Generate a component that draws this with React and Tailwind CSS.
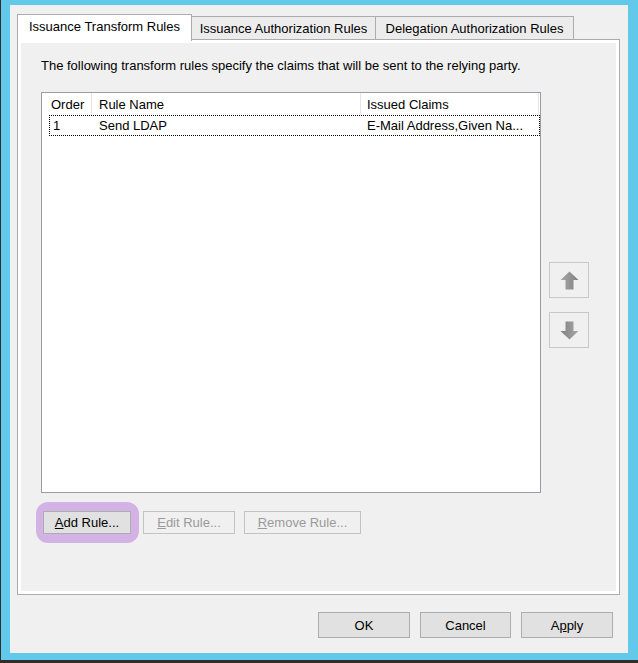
import React from "react";

function Arrow({ down }) {
    return (
        <svg width="19" height="19" viewBox="0 0 19 19" className={down ? "rotate-180" : ""}>
            <defs>
                <linearGradient id={down ? "gd" : "gu"} x1="0" y1="0" x2="1" y2="0">
                    <stop offset="0" stopColor="#a9a9a9" />
                    <stop offset="1" stopColor="#7f7f7f" />
                </linearGradient>
            </defs>
            <polygon
                points="9.5,0.5 18.5,9 13.5,9 13.5,18.5 5.5,18.5 5.5,9 0.5,9"
                fill={`url(#${down ? "gd" : "gu"})`}
            />
        </svg>
    );
}

function Btn({ children, w, disabled }) {
    return (
        <button
            className={
                "h-[23px] flex items-center justify-center border " +
                w +
                (disabled
                    ? " bg-[#f0f0f0] border-[#c3c3c3] text-[#9a9a9a]"
                    : " bg-[#e1e1e1] border-[#adadad] text-black")
            }
        >
            {children}
        </button>
    );
}

export default function App() {
    return (
        <div className="w-[638px] h-[663px] bg-[#2e2e2e] pl-px pb-[3px] font-['Liberation_Sans',Arial,sans-serif] text-[13px] leading-[15px] text-black">
            <div className="h-full bg-[#62c9ea] pt-[5px] pl-[9px] pr-[10px] pb-[7px]">
                <div className="h-full bg-[#f0f0f0] flex flex-col pt-[9px] pl-[7px] pr-[8px]">

                    {/* TABS */}
                    <div className="flex items-end h-[25px]">
                        <div className="relative z-10 h-[27px] -mb-[2px] w-[175px] bg-white border border-b-0 border-[#acacac] flex items-center justify-center pb-[3px]">
                            Issuance Transform Rules
                        </div>
                        <div className="h-[23px] w-[184px] bg-[#ececec] border-t border-r border-[#acacac] flex items-center justify-center">
                            Issuance Authorization Rules
                        </div>
                        <div className="h-[23px] w-[198px] bg-[#ececec] border-t border-r border-[#acacac] flex items-center justify-center">
                            Delegation Authorization Rules
                        </div>
                    </div>

                    {/* PANEL */}
                    <div className="h-[556px] border border-[#acacac] bg-white p-[3px]">
                        <div className="h-full bg-[#f0f0f0] pl-[20px] pt-[15px]">
                            <p>The following transform rules specify the claims that will be sent to the relying party.</p>

                            <div className="flex mt-[19px]">
                                {/* LIST */}
                                <div className="w-[500px] h-[401px] border border-[#9b9ca1] bg-white">
                                    <div className="flex h-[22px] items-center">
                                        <div className="w-[50px] h-full border-r border-[#e5e5e5] pl-[9px] flex items-center">Order</div>
                                        <div className="w-[269px] h-full border-r border-[#e5e5e5] pl-[7px] flex items-center">Rule Name</div>
                                        <div className="w-[178px] h-full border-r border-[#e5e5e5] pl-[6px] flex items-center">Issued Claims</div>
                                    </div>
                                    <div className="ml-[7px] w-[491px] h-[21px] border border-dotted border-black flex items-center">
                                        <div className="w-[42px] pl-[3px]">1</div>
                                        <div className="w-[269px] pl-[7px]">Send LDAP</div>
                                        <div className="pl-[6px]">E-Mail Address,Given Na...</div>
                                    </div>
                                </div>

                                {/* MOVE BUTTONS */}
                                <div className="ml-[8px] mt-[170px] flex flex-col gap-[14px]">
                                    <button className="w-[40px] h-[36px] border border-[#c8c8c8] bg-[#f0f0f0] flex items-center justify-center">
                                        <Arrow />
                                    </button>
                                    <button className="w-[40px] h-[36px] border border-[#c8c8c8] bg-[#f0f0f0] flex items-center justify-center">
                                        <Arrow down />
                                    </button>
                                </div>
                            </div>

                            {/* RULE BUTTONS */}
                            <div className="flex mt-[18px] ml-[2px]">
                                <div className="relative">
                                    <span className="absolute -left-[7px] -right-[8px] -top-[9px] -bottom-[9px] rounded-[12px] bg-[#d3b2e5]" />
                                    <div className="relative">
                                        <Btn w="w-[88px]">
                                            <span><span className="underline">A</span>dd Rule...</span>
                                        </Btn>
                                    </div>
                                </div>
                                <div className="ml-[12px]">
                                    <Btn w="w-[92px]" disabled>
                                        <span><span className="underline">E</span>dit Rule...</span>
                                    </Btn>
                                </div>
                                <div className="ml-[9px]">
                                    <Btn w="w-[117px]" disabled>
                                        <span><span className="underline">R</span>emove Rule...</span>
                                    </Btn>
                                </div>
                            </div>
                        </div>
                    </div>

                    {/* FOOTER */}
                    <div className="flex justify-end gap-[10px] mt-[17px] pr-[7px]">
                        <button className="w-[92px] h-[26px] bg-[#e1e1e1] border border-[#adadad]">OK</button>
                        <button className="w-[91px] h-[26px] bg-[#e1e1e1] border border-[#adadad]">Cancel</button>
                        <button className="w-[92px] h-[26px] bg-[#e1e1e1] border border-[#adadad]">
                            A<span className="underline">p</span>ply
                        </button>
                    </div>

                </div>
            </div>
        </div>
    );
}
